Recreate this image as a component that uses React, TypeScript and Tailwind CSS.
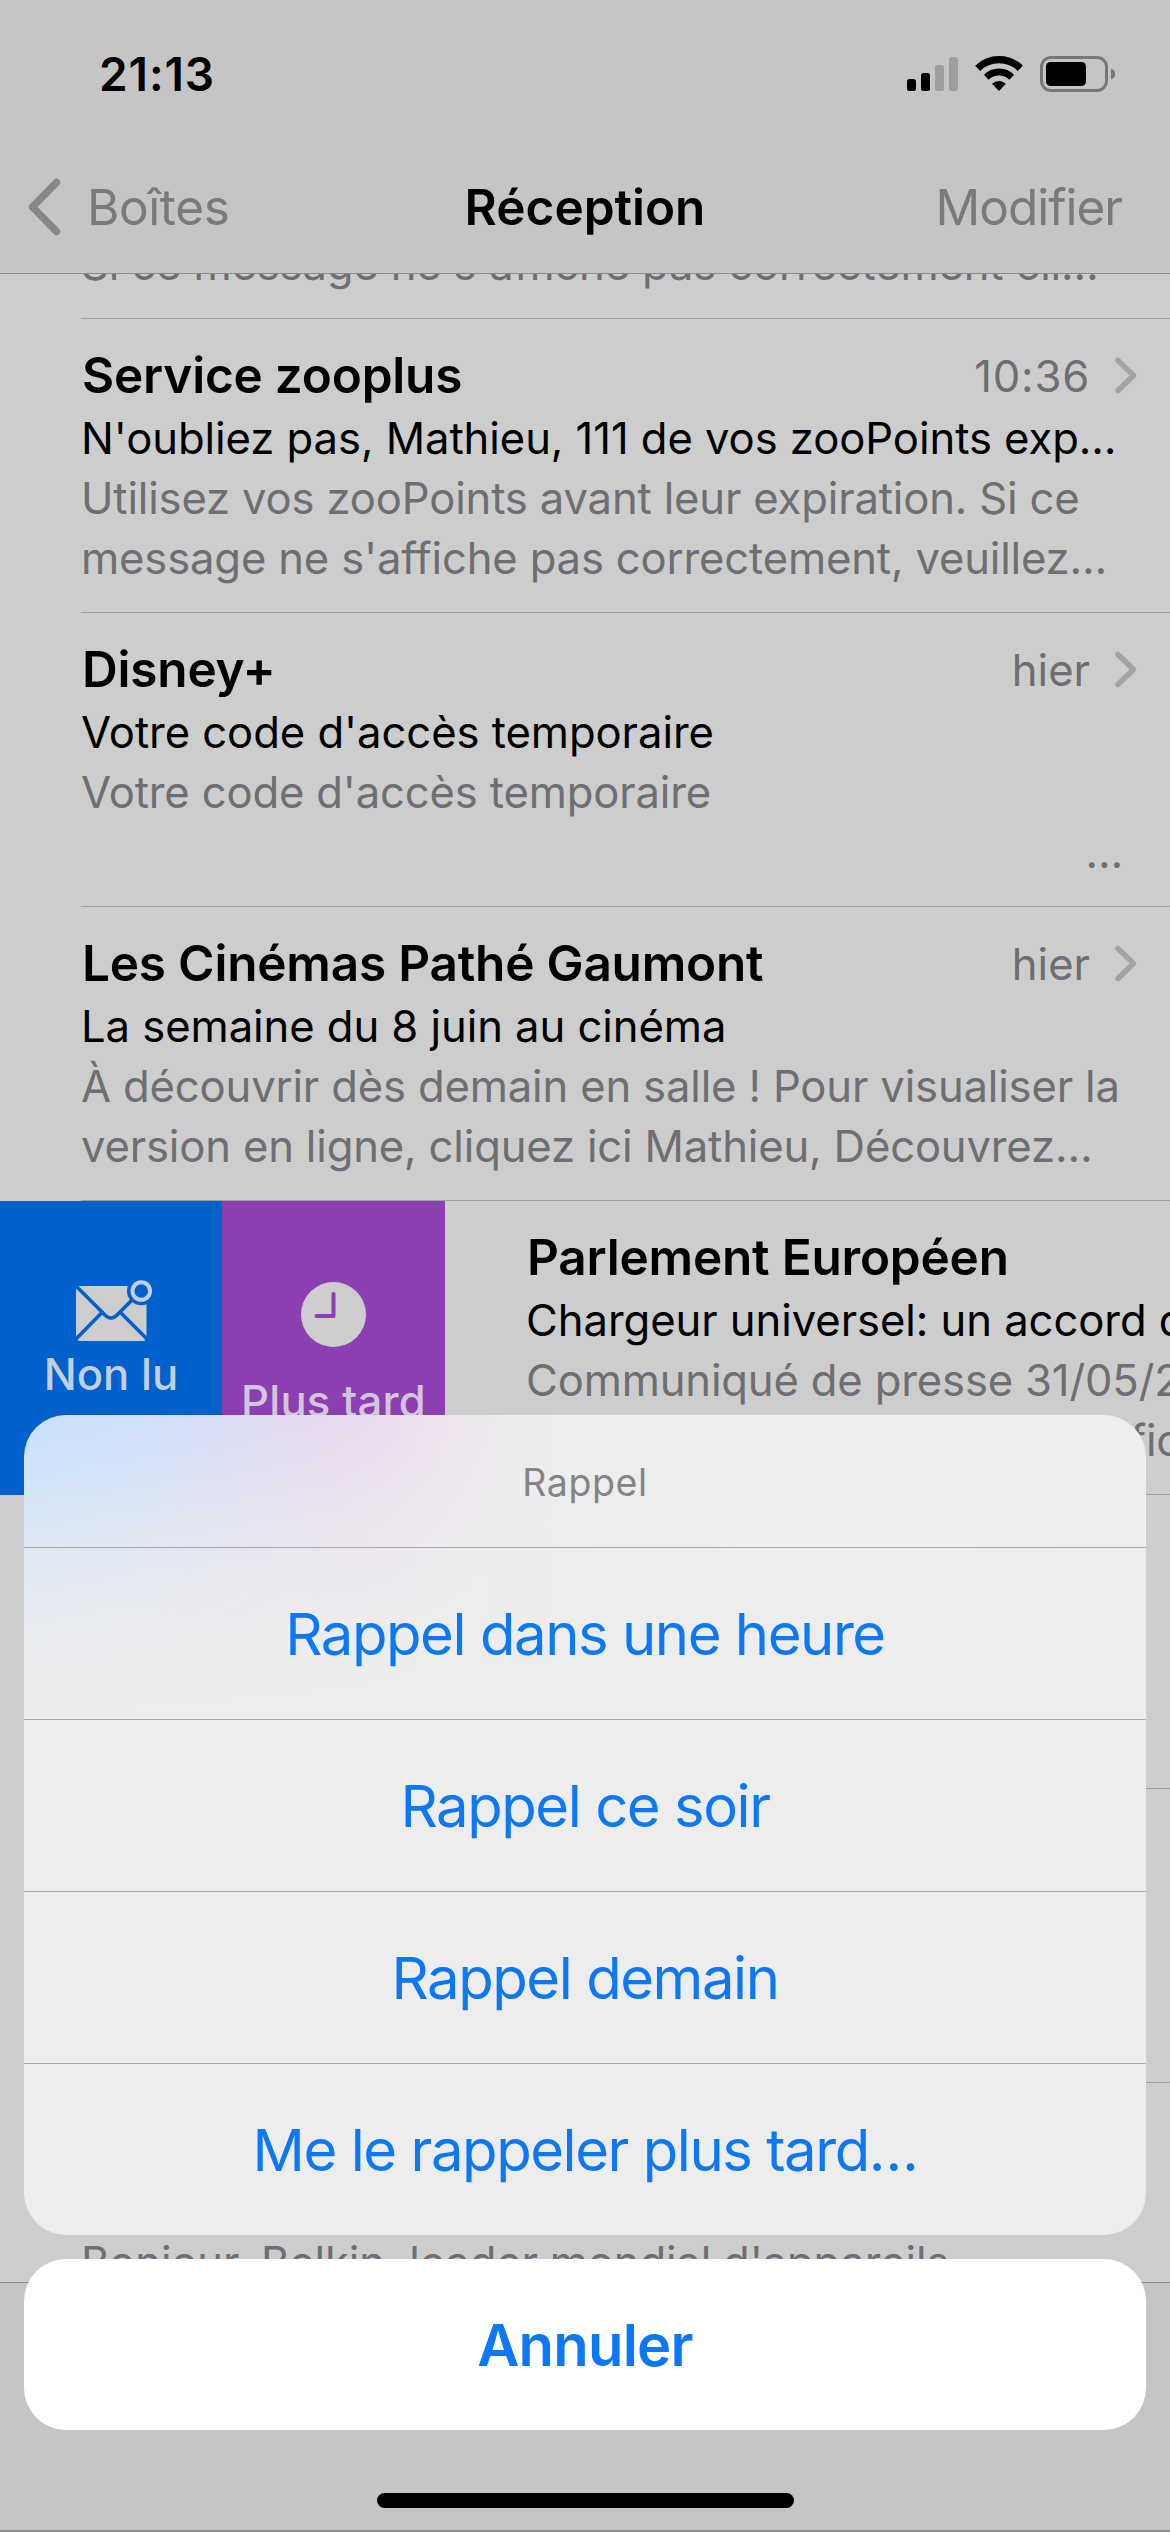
import React from "react";

const mails = [
  {
    from: "Service zooplus",
    date: "10:36",
    subject: "N'oubliez pas, Mathieu, 111 de vos zooPoints exp…",
    preview: ["Utilisez vos zooPoints avant leur expiration. Si ce", "message ne s'affiche pas correctement, veuillez…"],
  },
  {
    from: "Disney+",
    date: "hier",
    subject: "Votre code d'accès temporaire",
    preview: ["Votre code d'accès temporaire"],
    more: true,
  },
  {
    from: "Les Cinémas Pathé Gaumont",
    date: "hier",
    subject: "La semaine du 8 juin au cinéma",
    preview: ["À découvrir dès demain en salle ! Pour visualiser la", "version en ligne, cliquez ici Mathieu, Découvrez…"],
  },
];

const options = ["Rappel dans une heure", "Rappel ce soir", "Rappel demain", "Me le rappeler plus tard…"];

const StatusBar = () => (
  <div className="flex h-[147px] pt-[55px] pl-[99px] pr-[55px] justify-between items-start">
    <div className="text-[46px] leading-[38px] font-semibold tracking-[0.9px]">21:13</div>
    <div className="flex items-start">
      <svg width="51" height="37" viewBox="0 0 51 37">
        <rect x="0" y="24" width="9" height="12" rx="2.5" />
        <rect x="14" y="18" width="9" height="18" rx="2.5" />
        <rect x="28" y="10" width="9" height="26" rx="2.5" fill="#9e9e9e" />
        <rect x="42" y="2" width="9" height="34" rx="2.5" fill="#9e9e9e" />
      </svg>
      <svg className="ml-[17px]" width="48" height="37" viewBox="0 0 48 37">
        <path d="M2.7 13.3a30.5 30.5 0 0 1 42.6 0" fill="none" stroke="#000" strokeWidth="7.4" />
        <path d="M11.3 22.2a18.2 18.2 0 0 1 25.4 0" fill="none" stroke="#000" strokeWidth="7" />
        <path d="M24 36l-6.9-7.3a10 10 0 0 1 13.8 0z" />
      </svg>
      <svg className="ml-[17px]" width="75" height="38" viewBox="0 0 75 38">
        <rect x="1.5" y="2.5" width="65" height="33" rx="9.5" fill="none" stroke="#777" strokeWidth="3" />
        <rect x="6" y="7" width="40" height="24" rx="4.5" />
        <path d="M71 13.5c2.6 1 4.2 3 4.2 5.5s-1.6 4.5-4.2 5.5z" fill="#777" />
      </svg>
    </div>
  </div>
);

const NavBar = () => (
  <div className="grid grid-cols-3 items-center h-[120px] px-[48px] text-[49.5px] leading-[60px] text-[#7a7a7b]">
    <div className="flex items-center -ml-[21px]">
      <svg width="34" height="58" viewBox="0 0 34 58" fill="none" stroke="#868686" strokeWidth="7.5" strokeLinecap="round" strokeLinejoin="round">
        <path d="M29.500 4.500L5.500 29l24 24.500" />
      </svg>
      <span className="ml-[26px] tracking-[-0.4px]">Boîtes</span>
    </div>
    <div className="text-center font-semibold text-black">Réception</div>
    <div className="text-right tracking-[-1px]">Modifier</div>
  </div>
);

const Chevron = () => (
  <svg width="22" height="37" viewBox="0 0 22 37" fill="none" stroke="#a3a3a5" strokeWidth="5.5" strokeLinecap="round" strokeLinejoin="round">
    <path d="M3 3.500l15.500 15L3 33.500" />
  </svg>
);

const ROW = "h-[294px] ml-[81px] pt-[26px] border-b border-[#a0a0a3] whitespace-nowrap";
const FROM = "pl-[1px] text-[49.5px] leading-[60px] font-semibold tracking-[-0.2px]";
const SUBJECT = "mt-[4px] text-[43.6px] leading-[60px] tracking-[-0.06px]";
const PREVIEW = "text-[43.6px] leading-[60px] tracking-[-0.16px] text-[#6e6e73]";

// @ts-ignore
const MailRow = ({ mail }) => (
  <div className={ROW}>
    <div className="flex items-center pr-[33px]">
      <div className={FROM + " flex-1"}>{mail.from}</div>
      <div className={"text-[43.6px] leading-[60px] pt-[2px] -mb-[2px] text-[#6e6e73] " + (mail.date.includes(":") ? "tracking-[0.8px]" : "")}>{mail.date}</div>
      <div className="ml-[25px]"><Chevron /></div>
    </div>
    <div className={SUBJECT}>{mail.subject}</div>
    {mail.preview.map((line) => <div key={line} className={PREVIEW}>{line}</div>)}
    {mail.more && <div className={PREVIEW + " text-right pr-[47px]"}>…</div>}
  </div>
);

const SwipedRow = () => (
  <div className="flex h-[294px] w-[1615px]">
    <div className="w-[222px] bg-[#0060cc] flex flex-col items-center text-[#c3cfe0] text-[43.6px] leading-[60px] font-medium">
      <svg className="mt-[79px]" width="82" height="62" viewBox="70 1280 82 62">
        <mask id="env">
          <rect x="70" y="1280" width="82" height="62" fill="#fff" />
          <g fill="none" stroke="#000" strokeWidth="3.6">
            <path d="M75 1285l30.500 30.500q5.500 5.500 11 0l25-25" />
            <path d="M101.500 1313l-26.500 27M121 1313l27 27" />
          </g>
          <circle cx="141.3" cy="1291" r="14.3" fill="#000" />
        </mask>
        <rect x="76" y="1286" width="70.5" height="55" rx="4" fill="#cdcdcd" mask="url(#env)" />
        <circle cx="141.3" cy="1291" r="8.8" fill="none" stroke="#c3cfe0" strokeWidth="4" />
      </svg>
      <div className="mt-[3px]">Non lu</div>
    </div>
    <div className="w-[223px] bg-[#8b3fb1] flex flex-col items-center text-[#d3c5dc] text-[43.6px] leading-[60px] font-medium whitespace-nowrap">
      <svg className="mt-[81px]" width="65" height="65" viewBox="0 0 65 65">
        <circle cx="32.5" cy="32.5" r="32.5" fill="#cdcdcd" />
        <path d="M32.500 12v22H15.500" fill="none" stroke="#8b3fb1" strokeWidth="4" strokeLinecap="round" strokeLinejoin="round" />
      </svg>
      <div className="mt-[25px] tracking-[0.2px]">Plus tard</div>
    </div>
    <div className="flex-1">
      <div className={ROW}>
        <div className={FROM}>Parlement Européen</div>
        <div className={SUBJECT}>Chargeur universel: un accord de</div>
        <div className={PREVIEW}>Communiqué de presse 31/05/2022</div>
        <div className={PREVIEW + " pl-[604px]"}>fic</div>
      </div>
    </div>
  </div>
);

const ActionSheet = () => (
  <div className="absolute left-[24px] right-[24px] top-[1415px] text-center text-[#0d78f5]">
    <div className="h-[820px] rounded-[42px] overflow-hidden bg-[linear-gradient(175deg,#ededee00_0px,#ededee38_60px,#ededee90_125px,#ededeecc_185px,#ededeef0_240px,#ededee_300px),linear-gradient(to_right,#c9e1fc_0px,#cfe0fb_110px,#d9dcf6_200px,#e8d8f0_310px,#ebdbef_360px,#efe4ef_430px,#ecebed_490px,#eeeeef_560px,#efeff0_1122px)]">
      <div className="h-[133px] border-b border-[#a9abb0] pt-[38px] text-[37.5px] leading-[60px] tracking-[0.6px] text-[#858588]">Rappel</div>
      {options.map((label) => (
        <div key={label} className="h-[172px] pt-[46px] border-b border-[#a9abb0] last:border-0 text-[58px] leading-[80px] tracking-[-1.45px]">{label}</div>
      ))}
    </div>
    <div className="mt-[24px] h-[171px] rounded-[42px] bg-white pt-[46px] text-[58px] leading-[80px] font-semibold tracking-[-0.8px]">Annuler</div>
  </div>
);

export default function App() {
  return (
    <div className="relative flex flex-col w-[1170px] h-[2532px] overflow-hidden bg-[#cdcdce] text-black font-['Inter',sans-serif]">
      <div className="h-[274px] shrink-0 bg-[#c5c5c6] border-b border-[#8b8b8d]">
        <StatusBar />
        <NavBar />
      </div>
      <div className="h-[2008px] shrink-0 overflow-hidden">
        <div className="h-[45px] flex flex-col justify-end ml-[81px] pb-[23px] border-b border-[#a0a0a3] overflow-hidden">
          <div className={PREVIEW}>Si ce message ne s'affiche pas correctement cli…</div>
        </div>
        {mails.map((mail) => <MailRow key={mail.from} mail={mail} />)}
        <SwipedRow />
        <div className="h-[294px] ml-[81px] border-b border-[#a0a0a3]" />
        <div className="h-[294px] ml-[81px] border-b border-[#a0a0a3]" />
        <div className="h-[294px] ml-[81px] pt-[150px]">
          <div className={PREVIEW}>Bonjour, Belkin, leader mondial d'appareils</div>
        </div>
      </div>
      <div className="flex-1 bg-[#c5c5c6] border-t border-b-2 border-t-[#8b8b8d] border-b-[#8f8f91] flex flex-col items-center justify-end pb-[22px]">
        <div className="w-[417px] h-[15px] rounded-full bg-black" />
      </div>
      <ActionSheet />
    </div>
  );
}
